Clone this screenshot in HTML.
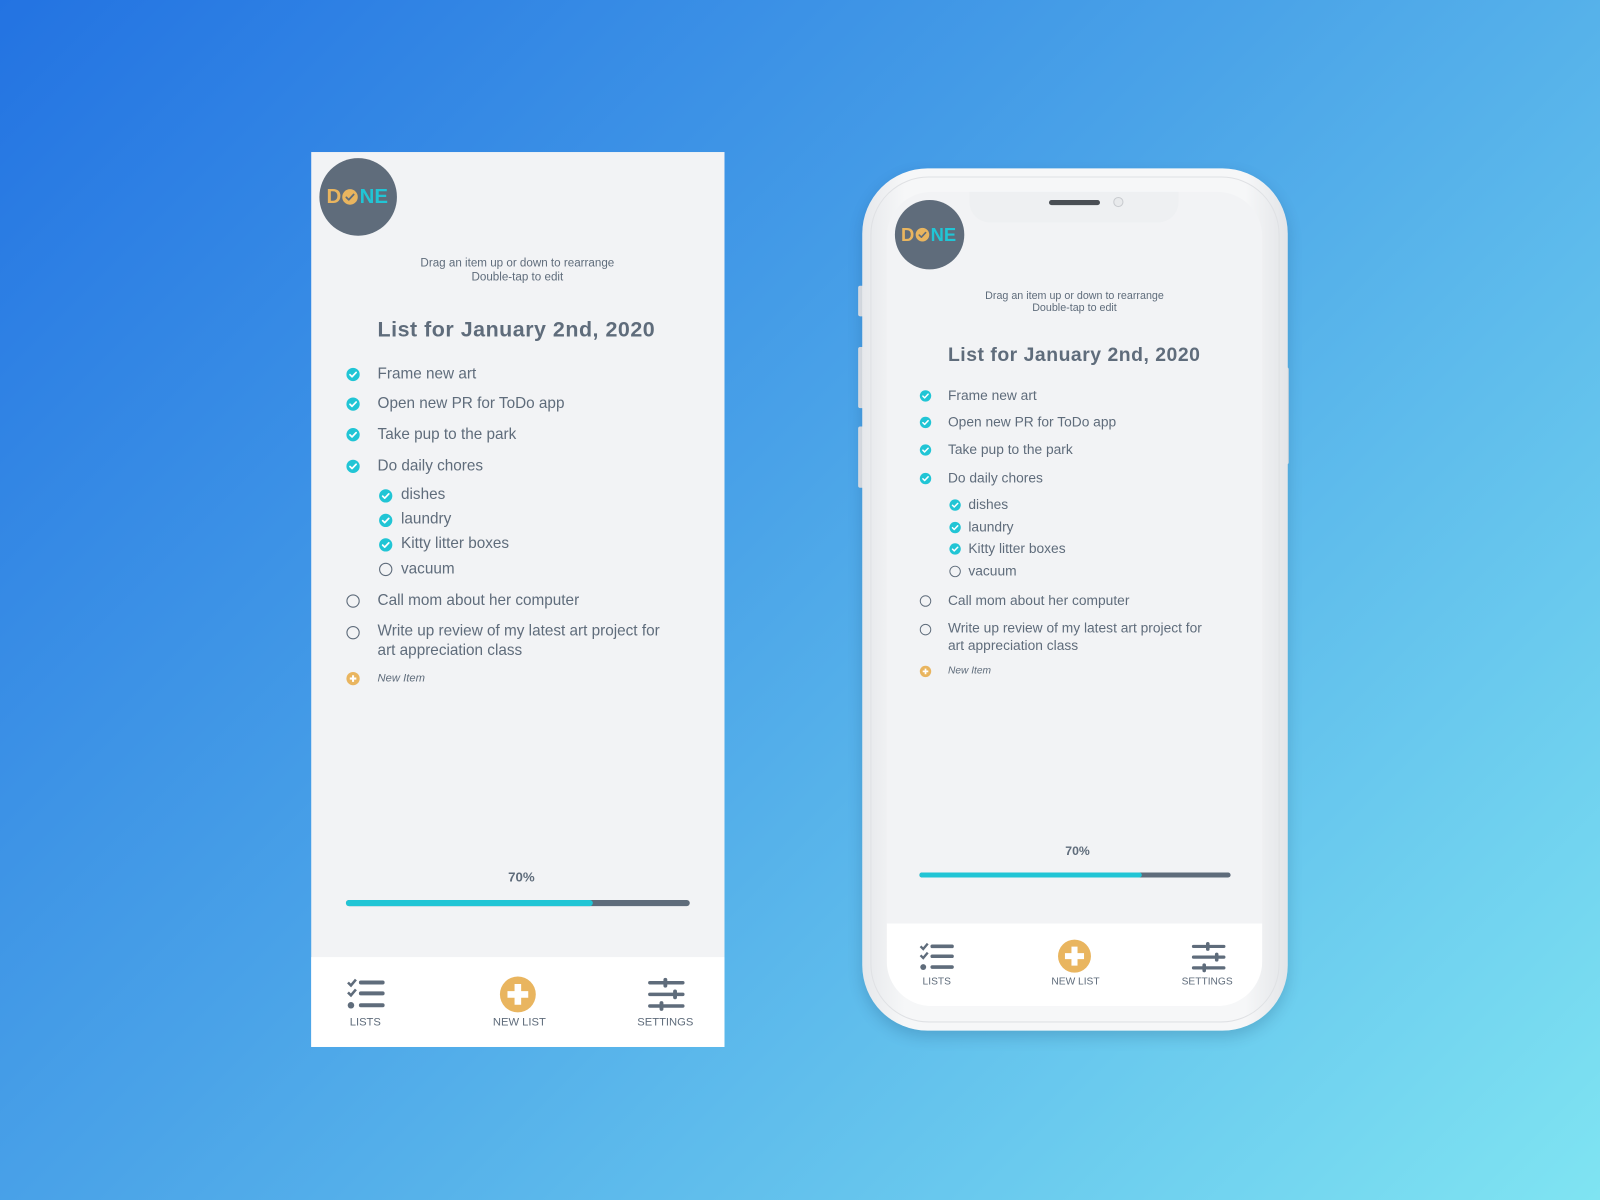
<!DOCTYPE html>
<html><head><meta charset="utf-8"><style>
html,body{margin:0;padding:0;width:1600px;height:1200px;overflow:hidden}
body{background:linear-gradient(135deg,#2373e2 0%,#4aa3e8 45%,#7fe4f2 100%);font-family:"Liberation Sans",sans-serif;color:#5f6c7b}
#w{position:absolute;left:0;top:0;width:1568px;height:1176px;transform:scale(1.020408);transform-origin:0 0}
.a{position:absolute}
.t{position:absolute;white-space:nowrap;height:20px;line-height:20px}
.c{transform:translateX(-50%);text-align:center}
.title{font-weight:bold;letter-spacing:0.5px}
.lbl{font-size:11px}
.logo{position:absolute;white-space:nowrap;font-weight:bold;display:flex;align-items:center}
</style></head><body>
<svg width="0" height="0" style="position:absolute">
<defs>
<symbol id="ck" viewBox="0 0 14 14"><circle cx="7" cy="7" r="6.5" fill="#21c5d5"/><path d="M4 7.2l2 2 4-4.2" stroke="#fff" stroke-width="1.7" fill="none" stroke-linecap="round" stroke-linejoin="round"/></symbol>
<symbol id="un" viewBox="0 0 14 14"><circle cx="7" cy="7" r="6" fill="none" stroke="#5f6c7b" stroke-width="1.1"/></symbol>
<symbol id="pl" viewBox="0 0 14 14"><circle cx="7" cy="7" r="6.5" fill="#e9b55f"/><path d="M7 3.8v6.4M3.8 7h6.4" stroke="#fff" stroke-width="2"/></symbol>
<symbol id="lo" viewBox="0 0 20 20"><circle cx="10" cy="10" r="9.5" fill="#e9b55f"/><path d="M5.5 10.5l3 3 6-6.5" stroke="#5f6c7b" stroke-width="2.2" fill="none" stroke-linecap="round" stroke-linejoin="round"/></symbol>
<symbol id="lists" viewBox="0 0 40 34"><path d="M2 5l3 3 5-6M2 15l3 3 5-6" stroke="#5f6c7b" stroke-width="2.6" fill="none"/><circle cx="5" cy="28" r="3.3" fill="#5f6c7b"/><path d="M15 5h22M15 16h22M15 28h22" stroke="#5f6c7b" stroke-width="4" stroke-linecap="round"/></symbol>
<symbol id="newl" viewBox="0 0 40 40"><circle cx="20" cy="20" r="19" fill="#e9b55f"/><path d="M20 9v22M9 20h22" stroke="#fff" stroke-width="7"/></symbol>
<symbol id="sett" viewBox="0 0 40 34"><path d="M3 5h34M3 17h34M3 29h34" stroke="#5f6c7b" stroke-width="3.6" stroke-linecap="round"/><rect x="17" y="0" width="4" height="10" rx="2" fill="#5f6c7b"/><rect x="27" y="12" width="4" height="10" rx="2" fill="#5f6c7b"/><rect x="13" y="24" width="4" height="10" rx="2" fill="#5f6c7b"/></symbol>
</defs></svg>
<div id="w">
<!-- LEFT SCREEN -->
<div class="a" style="left:305px;top:149px;width:405px;height:877px;background:#f2f3f5"></div>
<div class="a" style="left:305px;top:938px;width:405px;height:88px;background:#fff"></div>
<div class="a" style="left:313px;top:155px;width:76px;height:76px;border-radius:50%;background:#5f6c7b"></div>
<div class="logo" style="left:320px;top:182px;height:22px;font-size:20px"><span style="color:#e9b55f">D</span><svg width="16" height="16" style="margin:0 1px"><use href="#lo"/></svg><span style="color:#21c5d5">NE</span></div>
<div class="t c" style="left:507px;top:248px;font-size:11.4px">Drag an item up or down to rearrange</div>
<div class="t c" style="left:507px;top:262px;font-size:11.4px">Double-tap to edit</div>
<div class="t title" style="left:370px;top:314px;font-size:21px">List for January 2nd, 2020</div>
<svg class="a" style="left:339px;top:360px" width="14" height="14"><use href="#ck"/></svg><div class="t" style="left:370px;top:357px;font-size:15px">Frame new art</div>
<svg class="a" style="left:339px;top:389px" width="14" height="14"><use href="#ck"/></svg><div class="t" style="left:370px;top:386px;font-size:15px">Open new PR for ToDo app</div>
<svg class="a" style="left:339px;top:419px" width="14" height="14"><use href="#ck"/></svg><div class="t" style="left:370px;top:416px;font-size:15px">Take pup to the park</div>
<svg class="a" style="left:339px;top:450px" width="14" height="14"><use href="#ck"/></svg><div class="t" style="left:370px;top:447px;font-size:15px">Do daily chores</div>
<svg class="a" style="left:371px;top:479px" width="14" height="14"><use href="#ck"/></svg><div class="t" style="left:393px;top:475px;font-size:15px">dishes</div>
<svg class="a" style="left:371px;top:503px" width="14" height="14"><use href="#ck"/></svg><div class="t" style="left:393px;top:499px;font-size:15px">laundry</div>
<svg class="a" style="left:371px;top:527px" width="14" height="14"><use href="#ck"/></svg><div class="t" style="left:393px;top:523px;font-size:15px">Kitty litter boxes</div>
<svg class="a" style="left:371px;top:551px" width="14" height="14"><use href="#un"/></svg><div class="t" style="left:393px;top:548px;font-size:15px">vacuum</div>
<svg class="a" style="left:339px;top:582px" width="14" height="14"><use href="#un"/></svg><div class="t" style="left:370px;top:579px;font-size:15px">Call mom about her computer</div>
<svg class="a" style="left:339px;top:613px" width="14" height="14"><use href="#un"/></svg><div class="t" style="left:370px;top:609px;font-size:15px">Write up review of my latest art project for</div>
<div class="t" style="left:370px;top:628px;font-size:15px">art appreciation class</div>
<svg class="a" style="left:339px;top:658px" width="14" height="14"><use href="#pl"/></svg><div class="t" style="left:370px;top:655px;font-size:11px;font-style:italic">New Item</div>
<div class="t c" style="left:511px;top:850px;font-size:13px;font-weight:bold">70%</div>
<div class="a" style="left:339px;top:882px;width:337px;height:6px;border-radius:3px;background:#5f6c7b"></div>
<div class="a" style="left:339px;top:882px;width:242px;height:6px;border-radius:3px;background:#21c5d5"></div>
<svg class="a" style="left:339px;top:958px" width="39" height="33"><use href="#lists"/></svg>
<div class="t c lbl" style="left:358px;top:992px">LISTS</div>
<svg class="a" style="left:489px;top:956px" width="37" height="37"><use href="#newl"/></svg>
<div class="t c lbl" style="left:509px;top:992px">NEW LIST</div>
<svg class="a" style="left:634px;top:958px" width="38" height="33"><use href="#sett"/></svg>
<div class="t c lbl" style="left:652px;top:992px">SETTINGS</div>

<!-- PHONE -->
<div class="a" style="left:841px;top:280px;width:6px;height:30px;background:#e4e6ea;border-radius:2px"></div>
<div class="a" style="left:841px;top:340px;width:6px;height:60px;background:#e4e6ea;border-radius:2px"></div>
<div class="a" style="left:841px;top:418px;width:6px;height:60px;background:#e4e6ea;border-radius:2px"></div>
<div class="a" style="left:1259px;top:360px;width:4px;height:95px;background:#e4e6ea;border-radius:2px"></div>
<div class="a" style="left:845px;top:165px;width:417px;height:845px;border-radius:64px;background:linear-gradient(90deg,#e6e8eb,#f6f7f8 10%,#f6f7f8 90%,#e3e5e8);box-shadow:0 6px 14px rgba(0,40,80,0.18)"></div>
<div class="a" style="left:853px;top:173px;width:401px;height:829px;border-radius:57px;border:1px solid #dfe1e4;box-sizing:border-box"></div>
<div class="a" style="left:869px;top:188px;width:368px;height:798px;border-radius:44px;background:#f2f3f5;overflow:hidden">
  <div class="a" style="left:0;top:717px;width:368px;height:81px;background:#fff"></div>
</div>
<div class="a" style="left:950px;top:188px;width:205px;height:30px;border-radius:0 0 20px 20px;background:#eef0f2"></div>
<div class="a" style="left:1028px;top:196px;width:50px;height:5px;border-radius:3px;background:#4a4f55"></div>
<div class="a" style="left:1091px;top:193px;width:10px;height:10px;border-radius:50%;background:#e8eaec;border:1px solid #c8cbcf;box-sizing:border-box"></div>
<div class="a" style="left:877px;top:196px;width:68px;height:68px;border-radius:50%;background:#5f6c7b"></div>
<div class="logo" style="left:883px;top:220px;height:20px;font-size:18px"><span style="color:#e9b55f">D</span><svg width="14" height="14" style="margin:0 1px"><use href="#lo"/></svg><span style="color:#21c5d5">NE</span></div>
<div class="t c" style="left:1053px;top:280px;font-size:10.5px">Drag an item up or down to rearrange</div>
<div class="t c" style="left:1053px;top:292px;font-size:10.5px">Double-tap to edit</div>
<div class="t title" style="left:929px;top:339px;font-size:19px">List for January 2nd, 2020</div>
<svg class="a" style="left:901px;top:382px" width="12" height="12"><use href="#ck"/></svg><div class="t" style="left:929px;top:378px;font-size:13.5px">Frame new art</div>
<svg class="a" style="left:901px;top:408px" width="12" height="12"><use href="#ck"/></svg><div class="t" style="left:929px;top:404px;font-size:13.5px">Open new PR for ToDo app</div>
<svg class="a" style="left:901px;top:435px" width="12" height="12"><use href="#ck"/></svg><div class="t" style="left:929px;top:431px;font-size:13.5px">Take pup to the park</div>
<svg class="a" style="left:901px;top:463px" width="12" height="12"><use href="#ck"/></svg><div class="t" style="left:929px;top:459px;font-size:13.5px">Do daily chores</div>
<svg class="a" style="left:930px;top:489px" width="12" height="12"><use href="#ck"/></svg><div class="t" style="left:949px;top:485px;font-size:13.5px">dishes</div>
<svg class="a" style="left:930px;top:511px" width="12" height="12"><use href="#ck"/></svg><div class="t" style="left:949px;top:507px;font-size:13.5px">laundry</div>
<svg class="a" style="left:930px;top:532px" width="12" height="12"><use href="#ck"/></svg><div class="t" style="left:949px;top:528px;font-size:13.5px">Kitty litter boxes</div>
<svg class="a" style="left:930px;top:554px" width="12" height="12"><use href="#un"/></svg><div class="t" style="left:949px;top:550px;font-size:13.5px">vacuum</div>
<svg class="a" style="left:901px;top:583px" width="12" height="12"><use href="#un"/></svg><div class="t" style="left:929px;top:579px;font-size:13.5px">Call mom about her computer</div>
<svg class="a" style="left:901px;top:611px" width="12" height="12"><use href="#un"/></svg><div class="t" style="left:929px;top:606px;font-size:13.5px">Write up review of my latest art project for</div>
<div class="t" style="left:929px;top:623px;font-size:13.5px">art appreciation class</div>
<svg class="a" style="left:901px;top:652px" width="12" height="12"><use href="#pl"/></svg><div class="t" style="left:929px;top:648px;font-size:10px;font-style:italic">New Item</div>
<div class="t c" style="left:1056px;top:824px;font-size:12px;font-weight:bold">70%</div>
<div class="a" style="left:901px;top:855px;width:305px;height:5px;border-radius:3px;background:#5f6c7b"></div>
<div class="a" style="left:901px;top:855px;width:218px;height:5px;border-radius:3px;background:#21c5d5"></div>
<svg class="a" style="left:900px;top:923px" width="36" height="30"><use href="#lists"/></svg>
<div class="t c" style="left:918px;top:953px;font-size:10px">LISTS</div>
<svg class="a" style="left:1036px;top:920px" width="34" height="34"><use href="#newl"/></svg>
<div class="t c" style="left:1054px;top:953px;font-size:10px">NEW LIST</div>
<svg class="a" style="left:1167px;top:923px" width="35" height="30"><use href="#sett"/></svg>
<div class="t c" style="left:1183px;top:953px;font-size:10px">SETTINGS</div>
</div>
</body></html>
